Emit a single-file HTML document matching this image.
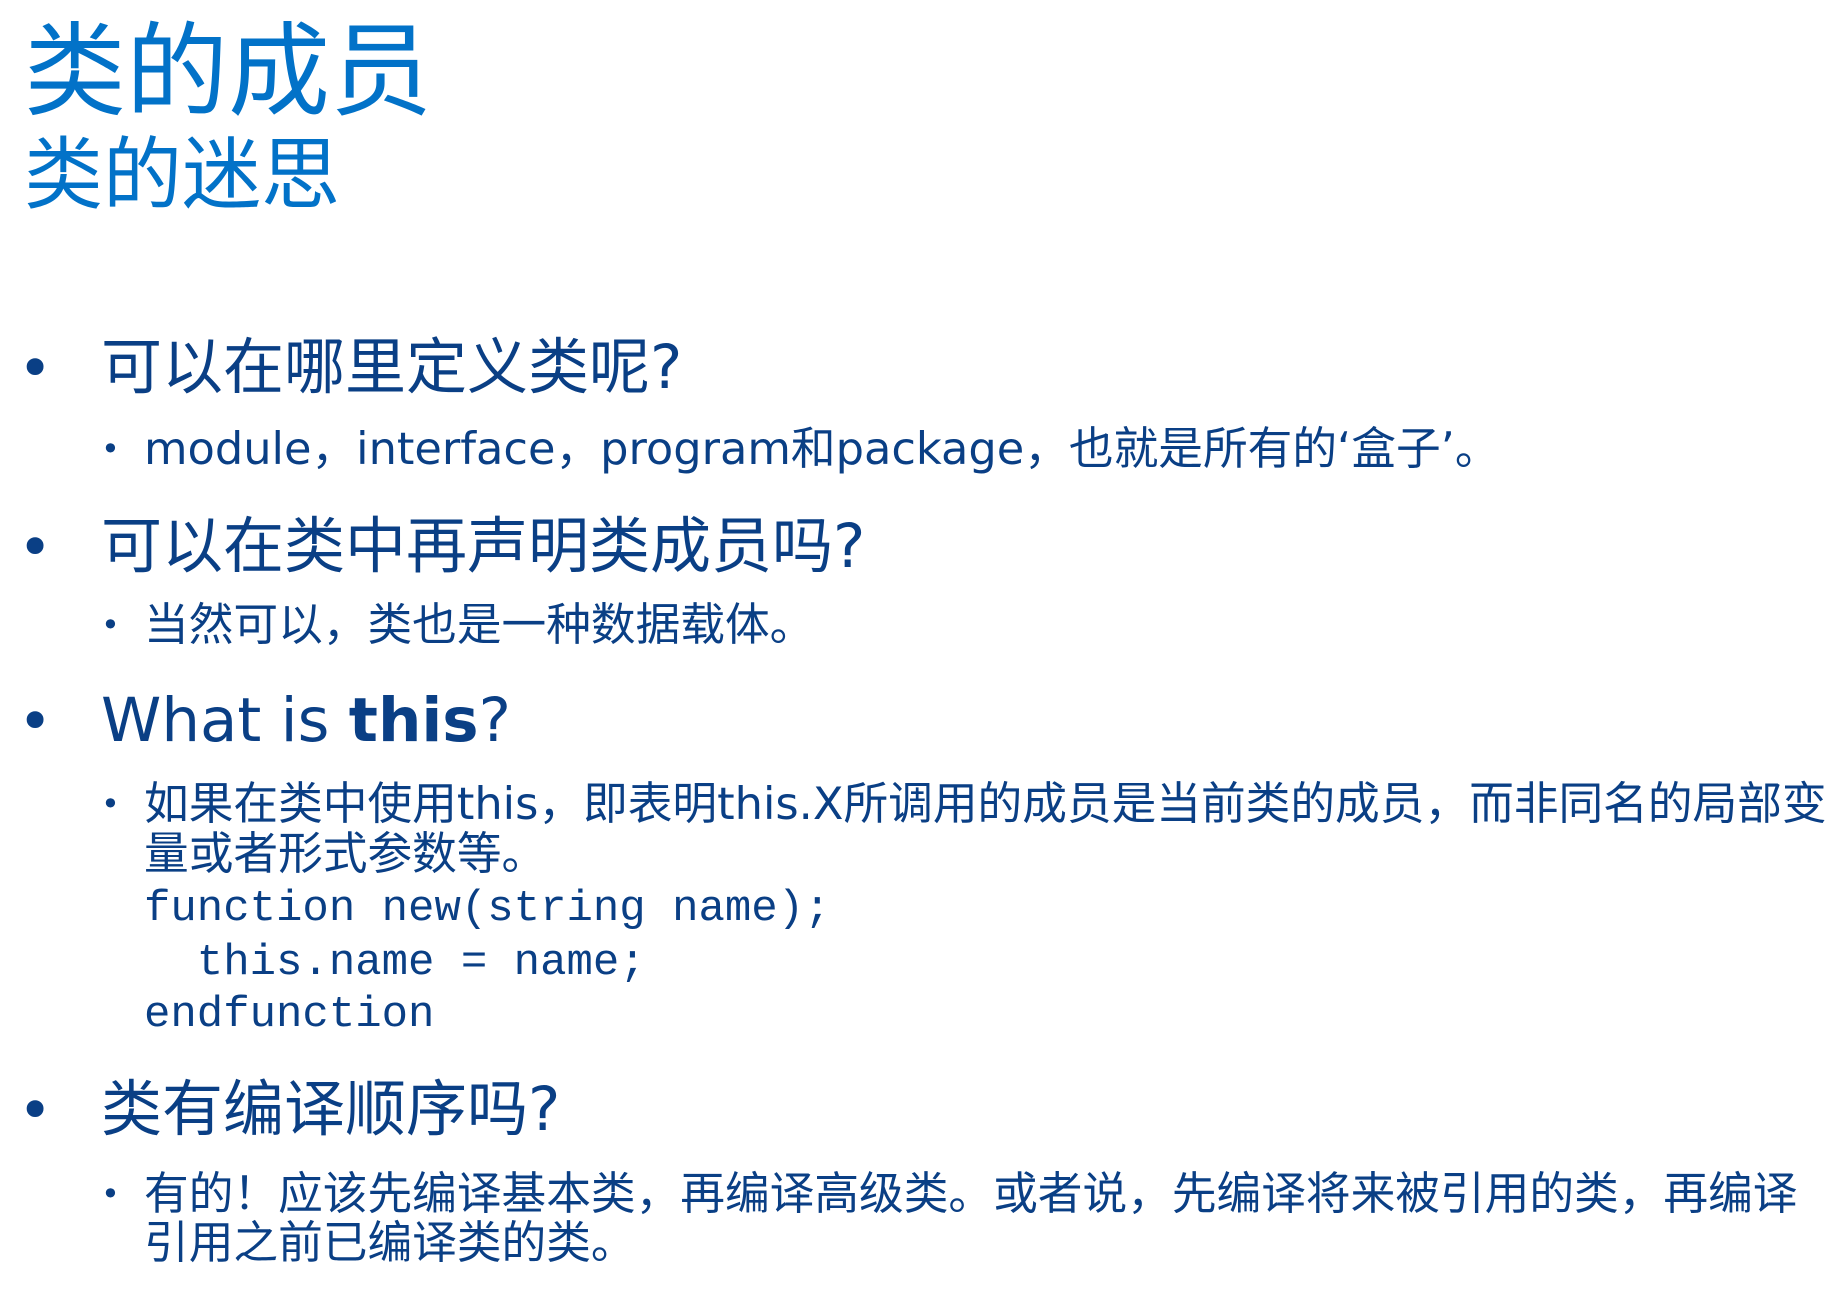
<!DOCTYPE html>
<html><head><meta charset="utf-8"><style>
body{margin:0;width:1848px;height:1313px;background:#fff;position:relative;overflow:hidden;font-family:"DejaVu Sans","Noto Sans CJK SC",sans-serif;color:#0a3f85}
div{position:absolute;white-space:pre}
.t{color:#0272c8;left:24px}
.h{font-size:61px;line-height:70px;left:101px}
.hd{font-size:58px;line-height:70px;left:18px}
.s{font-size:44.7px;line-height:50px;left:144px}
.sd{font-size:32px;line-height:50px;left:101px}
.c{font-family:"Liberation Mono",monospace;font-size:44px;line-height:52px;left:144px}
</style></head><body>
<div class="t" style="font-size:102px;line-height:110px;top:18px">类的成员</div>
<div class="t" style="font-size:79px;line-height:90px;top:130px">类的迷思</div>

<div class="hd" style="top:333px">•</div>
<div class="h" style="top:333px">可以在哪里定义类呢?</div>
<div class="sd" style="top:424px">•</div>
<div class="s" style="top:424px">module，interface，program和package，也就是所有的‘盒子’。</div>

<div class="hd" style="top:512px">•</div>
<div class="h" style="top:512px">可以在类中再声明类成员吗?</div>
<div class="sd" style="top:600px">•</div>
<div class="s" style="top:600px">当然可以，类也是一种数据载体。</div>

<div class="hd" style="top:686px">•</div>
<div class="h" style="top:686px">What is <b>this</b>?</div>
<div class="sd" style="top:779px">•</div>
<div class="s" style="top:779px">如果在类中使用this，即表明this.X所调用的成员是当前类的成员，而非同名的局部变</div>
<div class="s" style="top:829px">量或者形式参数等。</div>
<div class="c" style="top:883px">function new(string name);</div>
<div class="c" style="top:937px">  this.name = name;</div>
<div class="c" style="top:989px">endfunction</div>

<div class="hd" style="top:1075px">•</div>
<div class="h" style="top:1075px">类有编译顺序吗?</div>
<div class="sd" style="top:1169px">•</div>
<div class="s" style="top:1169px">有的！应该先编译基本类，再编译高级类。或者说，先编译将来被引用的类，再编译</div>
<div class="s" style="top:1218px">引用之前已编译类的类。</div>
</body></html>
